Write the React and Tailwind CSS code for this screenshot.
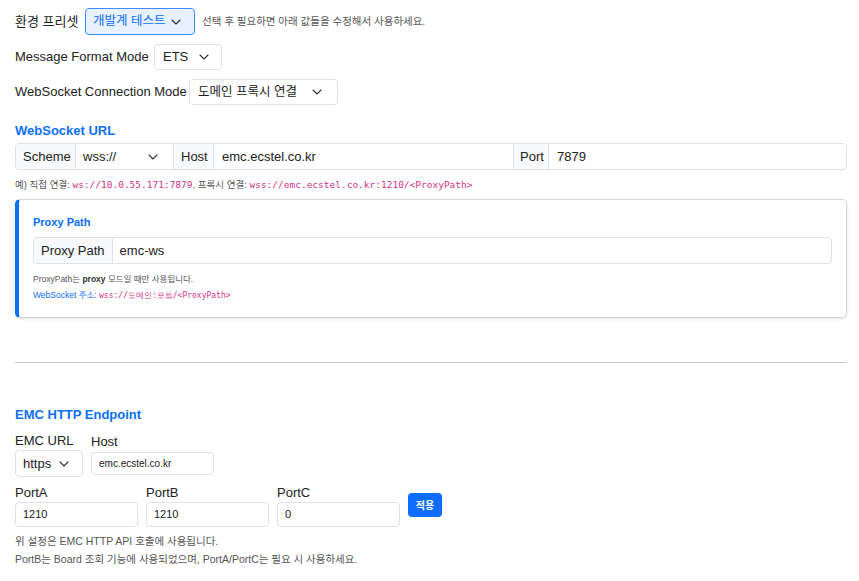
import { ChevronDown } from "lucide-react"

const sans = { fontFamily: '"Liberation Sans", "Noto Sans CJK KR", sans-serif' }

function FakeSelect({ value, className, chevronClass = "" }) {
  return (
    <div className={`shrink-0 flex items-center justify-between rounded-[4px] border ${className}`}>
      <span>{value}</span>
      <ChevronDown className={`w-[16px] h-[16px] ${chevronClass}`} strokeWidth={1.6} />
    </div>
  )
}

function Code({ children, size = "text-[9.5px]" }) {
  return (
    <code className={`text-[#d63384] ${size}`} style={{ fontFamily: '"DejaVu Sans Mono", monospace' }}>
      {children}
    </code>
  )
}

export default function App() {
  return (
    <div className="w-[859px] h-[581px] bg-white text-[#222] text-[13px] pl-[15px] pr-[12px] pt-[8px] overflow-hidden" style={sans}>

      {/* presets */}
      <div className="flex items-center h-[27px]">
        <span className="w-[70px] shrink-0">환경 프리셋</span>
        <FakeSelect
          value="개발계 테스트"
          className="w-[110px] h-[27px] border-[#3d8bfd] bg-[#e7f1ff] text-[#0d6efd] text-[12.5px] pl-[7px] pr-[10px]"
          chevronClass="text-[#333]"
        />
        <span className="ml-[7px] text-[10.5px] text-[#555]">선택 후 필요하면 아래 값들을 수정해서 사용하세요.</span>
      </div>

      <div className="flex items-center h-[26px] mt-[9px]">
        <span className="w-[139px] shrink-0">Message Format Mode</span>
        <FakeSelect value="ETS" className="w-[68px] h-[26px] border-[#dee2e6] pl-[8px] pr-[9px]" chevronClass="text-[#333]" />
      </div>

      <div className="flex items-center h-[26px] mt-[9px]">
        <span className="w-[174px] shrink-0">WebSocket Connection Mode</span>
        <FakeSelect value="도메인 프록시 연결" className="w-[149px] h-[26px] border-[#dee2e6] pl-[8px] pr-[12px] text-[12.5px]" chevronClass="text-[#333]" />
      </div>

      {/* websocket url */}
      <h3 className="mt-[18px] text-[13px] font-bold text-[#0d6efd] leading-[16px]">WebSocket URL</h3>

      <div className="mt-[4px] flex h-[27px] border border-[#dee2e6] rounded-[4px] overflow-hidden">
        <span className="flex items-center w-[60px] px-[7px] bg-[#f8f9fa] border-r border-[#dee2e6]">Scheme</span>
        <div className="flex items-center justify-between w-[98px] pl-[7px] pr-[12px] border-r border-[#dee2e6]">
          <span>wss://</span>
          <ChevronDown className="w-[16px] h-[16px] text-[#333]" strokeWidth={1.6} />
        </div>
        <span className="flex items-center w-[40px] px-[7px] bg-[#f8f9fa] border-r border-[#dee2e6]">Host</span>
        <span className="flex items-center w-[300px] px-[8px] border-r border-[#dee2e6]">emc.ecstel.co.kr</span>
        <span className="flex items-center w-[35px] px-[6px] bg-[#f8f9fa] border-r border-[#dee2e6]">Port</span>
        <span className="flex items-center flex-1 px-[8px]">7879</span>
      </div>

      <p className="mt-[8px] text-[9.5px] text-[#555] leading-[14px]">
        예) 직접 연결: <Code>ws://10.0.55.171:7879</Code>, 프록시 연결: <Code>wss://emc.ecstel.co.kr:1210/&lt;ProxyPath&gt;</Code>
      </p>

      {/* proxy card */}
      <div className="mt-[7px] h-[119px] border border-[#d6d6d6] border-l-[4px] border-l-[#0d6efd] rounded-[5px] shadow-[0_1px_3px_rgba(0,0,0,0.12)] pl-[14px] pr-[14px] pt-[15px]">
        <h4 className="text-[11px] font-bold text-[#0d6efd] leading-[14px]">Proxy Path</h4>
        <div className="mt-[8px] flex h-[27px] border border-[#dee2e6] rounded-[4px] overflow-hidden">
          <span className="flex items-center px-[7px] bg-[#f8f9fa] border-r border-[#dee2e6]">Proxy Path</span>
          <span className="flex items-center flex-1 px-[7px]">emc-ws</span>
        </div>
        <p className="mt-[9px] text-[8.5px] text-[#555] leading-[12px]">
          ProxyPath는 <b className="text-[#333]">proxy</b> 모드일 때만 사용됩니다.
        </p>
        <p className="mt-[4px] text-[8.5px] text-[#0d6efd] leading-[12px]">
          WebSocket 주소: <Code size="text-[8px]">wss://도메인:포트/&lt;ProxyPath&gt;</Code>
        </p>
      </div>

      <hr className="mt-[44px] border-0 border-t border-[#c8c8c8]" />

      {/* emc http */}
      <h3 className="mt-[44px] text-[13px] font-bold text-[#0d6efd] leading-[16px]">EMC HTTP Endpoint</h3>

      <div className="mt-[10px] flex gap-[8px]">
        <div className="flex flex-col">
          <span className="leading-[15px] text-[#222]">EMC URL</span>
          <FakeSelect value="https" className="mt-[2px] w-[68px] h-[27px] border-[#dee2e6] pl-[7px] pr-[10px]" chevronClass="text-[#333]" />
        </div>
        <div className="flex flex-col">
          <span className="leading-[15px] mt-[1px]">Host</span>
          <div className="mt-[3px] w-[123px] h-[23px] border border-[#dee2e6] rounded-[4px] flex items-center px-[7px] text-[10px]">emc.ecstel.co.kr</div>
        </div>
      </div>

      <div className="mt-[8px] flex gap-[8px] items-start">
        {[["PortA", "1210"], ["PortB", "1210"], ["PortC", "0"]].map(([label, v]) => (
          <div key={label} className="flex flex-col">
            <span className="leading-[15px]">{label}</span>
            <div className="mt-[2px] w-[123px] h-[25px] border border-[#dee2e6] rounded-[4px] flex items-center px-[7px] text-[11px]">{v}</div>
          </div>
        ))}
        <button className="mt-[8px] w-[34px] h-[24px] rounded-[4px] bg-[#0d6efd] text-white text-[10px] font-bold">적용</button>
      </div>

      <p className="mt-[7px] text-[10.5px] text-[#555] leading-[14px]">위 설정은 EMC HTTP API 호출에 사용됩니다.</p>
      <p className="mt-[4px] text-[10.5px] text-[#555] leading-[14px]">PortB는 Board 조회 기능에 사용되었으며, PortA/PortC는 필요 시 사용하세요.</p>
    </div>
  )
}
